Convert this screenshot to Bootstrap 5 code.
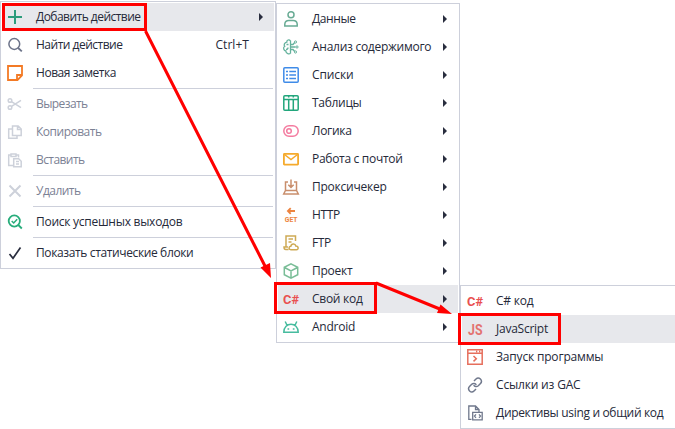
<!DOCTYPE html>
<html lang="ru">
<head>
<meta charset="utf-8">
<title>Добавить действие</title>
<link href="https://cdn.jsdelivr.net/npm/bootstrap@5.3.0/dist/css/bootstrap.min.css" rel="stylesheet">
<style>
body{width:675px;height:429px;overflow:hidden;background:#fff;font:12px/28px "Open Sans","Noto Sans",sans-serif;color:#252939}
.ctx{border:1px solid #cdd0db;padding:1px;background:#fff;flex:none}
.ctx-a{width:276px;margin-top:1px}
.ctx-b{width:184px;margin-top:3px}
.ctx-c{width:220px;margin-top:285px}
.item{height:28px;padding-left:4px;padding-right:11px;white-space:nowrap}
.item.on{background:#e7e8ec}
.item.off{color:#7b8194}
.item.off svg{color:#cdd1da}
.item svg{width:18px;height:18px;flex:none;margin-right:12px;fill:none;stroke:currentColor;stroke-width:1.5}
.item svg text{fill:currentColor;stroke:none;font-weight:700;font-family:Roboto,sans-serif}
.sub::after{content:"";margin-left:auto;border-left:4px solid #292d3e;border-top:4px solid transparent;border-bottom:4px solid transparent}
.ctx-b .sub{padding-right:11px}
.rule{height:1px;margin:1px 1px 1px 31px;background:#cdd0db}
.key{margin-left:auto;margin-right:14px}
.marks{left:0;top:0;pointer-events:none}
</style>
<script src="https://cdn.jsdelivr.net/npm/bootstrap@5.3.0/dist/js/bootstrap.bundle.min.js"></script>
</head>
<body>
<div class="d-flex align-items-start">
  <div class="ctx ctx-a">
    <div class="item on sub d-flex align-items-center"><svg style="color:#2c9c7c"><path stroke-width="2" d="M9 2v14M2 9h14"/></svg><span data-w="104.500">Добавить действие</span></div>
    <div class="item d-flex align-items-center"><svg style="color:#6c7389"><circle cx="8.3" cy="8" r="5.4"/><path stroke-width="1.8" d="m12.2 12 3.6 3.4"/></svg><span data-w="86.500">Найти действие</span><span class="key" data-w="33.500">Ctrl+T</span></div>
    <div class="item d-flex align-items-center"><svg style="color:#f37a25"><path stroke-width="1.8" d="M2 2h14v9.5L11.5 16H2zM16 11h-5v5"/></svg><span data-w="80">Новая заметка</span></div>
    <div class="rule"></div>
    <div class="item off d-flex align-items-center"><svg><circle cx="4" cy="5.5" r="1.8"/><circle cx="4" cy="12.5" r="1.8"/><path d="m5.5 6.7 9.5 6M5.5 11.3l9.5-6"/></svg><span data-w="51.500">Вырезать</span></div>
    <div class="item off d-flex align-items-center"><svg><path d="M6.5 3h5.7l3 3v6.500H6.500zM11.500 3v3.500h3.500M6 6H2.700v9.300h8.300v-2.500"/></svg><span data-w="65.500">Копировать</span></div>
    <div class="item off d-flex align-items-center"><svg><path d="M7 14.500H2.700V4H5m5 0h2.500v2.500M5 3h5v2.500H5zM7.700 7.700h5l2.500 2.500v5.500H7.700zM10 10.500h3M10 13h3"/></svg><span data-w="48.500">Вставить</span></div>
    <div class="rule"></div>
    <div class="item off d-flex align-items-center"><svg><path stroke-width="2" d="m3.500 3.500 11 11m0-11-11 11"/></svg><span data-w="44.500">Удалить</span></div>
    <div class="rule"></div>
    <div class="item d-flex align-items-center"><svg style="color:#27ad7b"><circle cx="8.300" cy="8" r="5.600" stroke-width="1.800"/><path stroke-width="1.800" d="m12.300 12 3.500 3.500"/><path d="m5.700 8 2 2 3.500-3.700"/></svg><span data-w="146.300">Поиск успешных выходов</span></div>
    <div class="rule"></div>
    <div class="item d-flex align-items-center"><svg style="color:#292d3e"><path stroke-width="1.700" d="m3.500 10 3.500 4.300L14.500 3.500"/></svg><span data-w="157.300">Показать статические блоки</span></div>
  </div>

  <div class="ctx ctx-b">
    <div class="item sub d-flex align-items-center"><svg style="color:#68ab94"><circle cx="9" cy="4.700" r="3"/><path d="M2.800 16v-2a4 4 0 0 1 4-3.500h4.400a4 4 0 0 1 4 3.500v2z"/></svg><span data-w="43.500">Данные</span></div>
    <div class="item sub d-flex align-items-center"><svg style="color:#65b29d"><path stroke-width="1.300" d="M8.500 2.500v13M8.500 3C7 .8 4.600 2.200 4.800 4.200 2.500 4.500 1.500 7 2.700 8.300.8 9.500 1.500 12.500 3.800 13c.2 2.700 3.500 3.800 4.700 2M4.500 6.500h2M4 11.500c1.500 0 2-.8 2-2M8.500 9h5M8.500 6.500H11l1.700-2M8.500 11.500H11l1.700 2"/><circle cx="13.500" cy="4" r="1.100" stroke-width="1"/><circle cx="15" cy="9" r="1.100" stroke-width="1"/><circle cx="13.500" cy="14" r="1.100" stroke-width="1"/></svg><span data-w="119.300">Анализ содержимого</span></div>
    <div class="item sub d-flex align-items-center"><svg style="color:#3f8be8"><rect x="1.800" y="1.800" width="14.400" height="14.400" rx="1"/><path d="M4 5.500h2m1.300 0H14M4 9h2m1.300 0H14M4 12.500h2m1.300 0H14"/></svg><span data-w="41.500">Списки</span></div>
    <div class="item sub d-flex align-items-center"><svg style="color:#22a67c"><rect x="1.800" y="1.800" width="14.400" height="14.400" rx="1"/><path d="M2 5.500h14M6.700 5.500V16M11.300 5.500V16M6.700 2v1.500M11.300 2v1.500"/></svg><span data-w="49.500">Таблицы</span></div>
    <div class="item sub d-flex align-items-center"><svg style="color:#f47ca0"><rect x="1.800" y="3.700" width="14.400" height="10.600" rx="5.300"/><circle cx="7" cy="9" r="2.300"/></svg><span data-w="39.500">Логика</span></div>
    <div class="item sub d-flex align-items-center"><svg style="color:#f5aa2c"><rect x="1.900" y="3.900" width="14.200" height="10.700" rx=".5" stroke-width="1.800"/><path d="m2.500 4.500 6.500 5 6.500-5"/></svg><span data-w="90.500">Работа с почтой</span></div>
    <div class="item sub d-flex align-items-center"><svg style="color:#c98e6c"><path d="M6 4H3.500v9M12 4h2.500v9M9 1.500V9M6.300 6.700 9 9.400l2.700-2.700M3.500 12.500h11L16.300 16H1.700z"/></svg><span data-w="74.500">Проксичекер</span></div>
    <div class="item sub d-flex align-items-center"><svg style="color:#ed8440"><path stroke-width="1.800" d="M13 5H6m2.700-2.800L5.900 5l2.800 2.800"/><text x="2.800" y="16" font-size="7" textLength="12.600" lengthAdjust="spacingAndGlyphs">GET</text></svg><span data-w="28">HTTP</span></div>
    <div class="item sub d-flex align-items-center"><svg style="color:#ceaa55"><path d="M6.500 15.500H3.800c-1.300 0-1.800-.8-1.800-2.500h4M4 13V2h9.500v5M6.500 5h4.500M6.500 8h3M8.800 15.700c-2.300 0-2.300-3.200 0-3.400.5-3 4.500-3 5-.3 3 0 3 3.700.7 3.700z"/></svg><span data-w="19">FTP</span></div>
    <div class="item sub d-flex align-items-center"><svg style="color:#79bd97"><path stroke-width="1.500" d="m9 1.800 6.700 3.500v7.400L9 16.200l-6.700-3.500V5.300zM2.500 5.500 9 9l6.500-3.500M9 9v7"/></svg><span data-w="40.500">Проект</span></div>
    <div class="item on sub d-flex align-items-center"><svg style="color:#e95050"><text x="1" y="13.500" font-size="13" textLength="16" lengthAdjust="spacingAndGlyphs">C#</text></svg><span data-w="50.500">Свой код</span></div>
    <div class="item sub d-flex align-items-center"><svg style="color:#47bc9f"><path d="M1.800 14.300c0-10.800 14.400-10.800 14.400 0zM5 7.300 3.200 3.500M13 7.300l1.800-3.800M5.500 11h1.700M10.800 11h1.700"/></svg><span data-w="43">Android</span></div>
  </div>

  <div class="ctx ctx-c">
    <div class="item d-flex align-items-center"><svg style="color:#e95050"><text x="1" y="13.700" font-size="13" textLength="16" lengthAdjust="spacingAndGlyphs">C#</text></svg><span data-w="37.500">C# код</span></div>
    <div class="item on d-flex align-items-center"><svg style="color:#e37370"><text x="2" y="14.500" font-size="14.500" textLength="14.500" lengthAdjust="spacingAndGlyphs">JS</text></svg><span data-w="52">JavaScript</span></div>
    <div class="item d-flex align-items-center"><svg style="color:#e66f5d"><path d="M1.800 1.800h14.400v14.400H1.800zM2 5.300h14M10 3.500h1.300M13 3.500h1.300M7.500 8l2.800 2.700-2.800 2.700"/></svg><span data-w="107.300">Запуск программы</span></div>
    <div class="item d-flex align-items-center"><svg style="color:#70788c"><path d="m8 5 2-2c2.800-2.800 7.500 1.500 4.500 4.500l-2.200 2.200c-1.500 1.400-3.700 1-4.600-.5M10 13l-2 2c-2.800 2.800-7.500-1.500-4.500-4.500l2.200-2.200c1.500-1.400 3.700-1 4.600.5"/></svg><span data-w="84.500">Ссылки из GAC</span></div>
    <div class="item d-flex align-items-center"><svg style="color:#70788c"><path stroke-width="1.300" d="M5.500 15.300H2.800V2h6.700L13 5.500V8M9.500 2v3.500H13M6.700 8.300h9.500v7.500H6.700zM10 10.300l-1.500 1.800 1.500 1.700M13 10.300l1.500 1.800-1.500 1.700"/></svg><span data-w="167.300">Директивы using и общий код</span></div>
  </div>
</div>

<svg class="marks position-absolute" width="675" height="429" fill="none" stroke="#f00" stroke-width="3">
  <rect x="3.500" y="4.500" width="142" height="25"/>
  <rect x="275.500" y="283.500" width="100" height="29"/>
  <rect x="459.500" y="314.500" width="100" height="29"/>
  <path d="M145.500 31 266 268M376 283l65 26.500"/>
  <path fill="#f00" stroke="none" d="m271 278-10.500-10.500 9.500-4.500zM452 314l-15-1 3.500-8.500z"/>
</svg>
<script>
document.querySelectorAll('[data-w]').forEach(el => {
  const gap = (el.dataset.w - el.getBoundingClientRect().width) / el.textContent.length;
  el.style.letterSpacing = gap.toFixed(3) + 'px';
});
</script>
</body>
</html>
